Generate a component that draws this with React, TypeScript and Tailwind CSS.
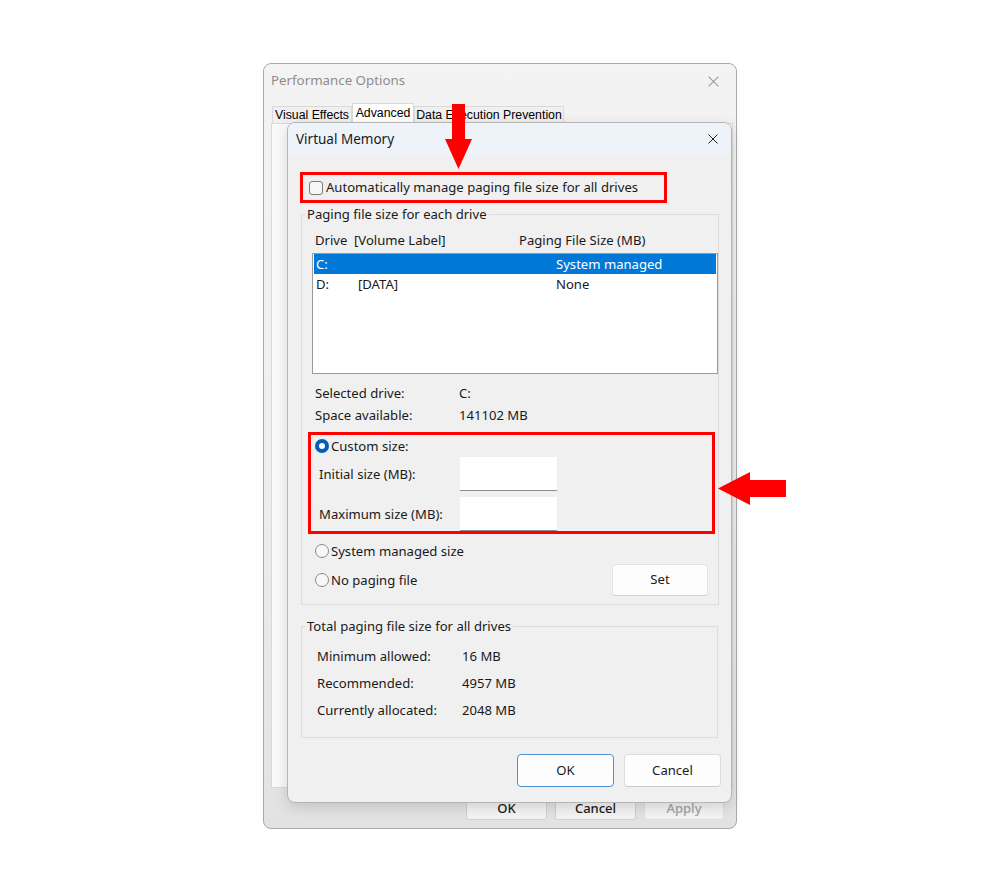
import React from 'react'

function CloseIcon({ className }: { className?: string }) {
  return (
    <svg viewBox="0 0 10 10" className={className} fill="none" stroke="currentColor" strokeWidth="1">
      <path d="M0.5 0.5 L9.5 9.5 M9.5 0.5 L0.5 9.5" />
    </svg>
  )
}

function Radio({ checked }: { checked?: boolean }) {
  if (checked) {
    return (
      <span className="flex h-[14px] w-[14px] shrink-0 items-center justify-center rounded-full bg-[#005fb8]">
        <span className="h-[6px] w-[6px] rounded-full bg-white" />
      </span>
    )
  }
  return <span className="h-[14px] w-[14px] shrink-0 rounded-full border border-[#8a8a8a] bg-[#f7f7f7]" />
}

function SizeInput() {
  return <div className="h-[34px] w-[97px] border-b border-[#8d8d8d] bg-white" />
}

export default function App() {
  const drives = [
    { letter: 'C:', label: '', size: 'System managed', selected: true },
    { letter: 'D:', label: '[DATA]', size: 'None', selected: false },
  ]

  const totals = [
    ['Minimum allowed:', '16 MB'],
    ['Recommended:', '4957 MB'],
    ['Currently allocated:', '2048 MB'],
  ]

  return (
    <div className="relative h-[890px] w-[1000px] overflow-hidden bg-white font-['Noto_Sans','Liberation_Sans',sans-serif] text-[#1a1a1a]">
      {/* Performance Options window (inactive, behind) */}
      <div className="absolute left-[263px] top-[63px] flex h-[766px] w-[474px] flex-col rounded-[8px] border border-[#a9a9a9] bg-gradient-to-b from-[#f3f3f3] via-[#efefef] to-[#e2e2e2]">
        <div className="flex h-[34px] items-center justify-between pl-[7px] pr-[17px] text-[13.3px] text-[#8c8c8c]">
          <span>Performance Options</span>
          <CloseIcon className="h-[11px] w-[11px] text-[#9a9a9a]" />
        </div>
        <div className="flex h-[25px] items-end whitespace-nowrap pl-[8px] font-['Liberation_Sans',sans-serif] text-[12.3px] text-black">
          <div className="flex h-[17px] w-[80px] items-center justify-center border border-b-0 border-[#d9d9d9] bg-[#f0f0f0]">
            Visual Effects
          </div>
          <div className="flex h-[20px] w-[62px] items-center justify-center border border-b-0 border-[#d9d9d9] bg-white">
            Advanced
          </div>
          <div className="flex h-[17px] w-[150px] items-center justify-center border border-b-0 border-[#d9d9d9] bg-[#f0f0f0]">
            Data Execution Prevention
          </div>
        </div>
        <div className="ml-[7px] mr-[3px] h-[665px] border border-[#d9d9d9] bg-[#f9f9f9]" />
        <div className="mt-[10px] flex justify-end gap-[8px] pr-[12px] text-[13px] font-medium">
          <div className="flex h-[22px] w-[81px] items-center justify-center rounded-[3px] border border-[#d0d0d0] bg-[#f3f3f3]">OK</div>
          <div className="flex h-[22px] w-[81px] items-center justify-center rounded-[3px] border border-[#d0d0d0] bg-[#f3f3f3]">Cancel</div>
          <div className="flex h-[22px] w-[80px] items-center justify-center rounded-[3px] border border-[#dedede] bg-[#f3f3f3] text-[#a3a3a3]">Apply</div>
        </div>
      </div>

      {/* Virtual Memory dialog */}
      <div className="absolute left-[287px] top-[122px] flex w-[445px] flex-col overflow-hidden rounded-[8px] border border-[#b5b5b5] bg-[#f0f0f0] text-[13.1px] shadow-[0_4px_14px_rgba(0,0,0,0.14)]">
        <div className="flex h-[32px] items-center justify-between bg-[#eef3f9] pl-[8px] pr-[13px] text-[13.5px]">
          <span>Virtual Memory</span>
          <CloseIcon className="h-[10px] w-[10px] text-[#222]" />
        </div>

        <div className="flex flex-col pl-[12px] pt-[17px]">
          <div className="flex h-[31px] w-[367px] items-center gap-[3px] border-[3px] border-[#ff0000] pl-[6px]">
            <span className="h-[14px] w-[14px] rounded-[3px] border border-[#7a7a7a] bg-[#f6f6f6]" />
            <span className="pt-[1px]">Automatically manage paging file size for all drives</span>
          </div>

          <fieldset className="ml-[1px] mt-[2px] w-[417px] border border-[#dcdcdc]">
            <legend className="ml-[3px] px-[2px] leading-[18px]">Paging file size for each drive</legend>
            <div className="flex flex-col pb-[8px] pl-[13px] pt-[8px]">
              <div className="flex h-[18px] items-center whitespace-nowrap pt-[1px]">
                <span className="w-[39px]">Drive</span>
                <span className="w-[165px]">[Volume Label]</span>
                <span>Paging File Size (MB)</span>
              </div>

              <div className="-ml-[3px] mt-[4px] h-[121px] w-[406px] border border-[#9a9a9a] bg-white">
                {drives.map((d) => (
                  <div
                    key={d.letter}
                    className={
                      d.selected
                        ? 'mx-[1px] flex h-[20px] items-center bg-[#0078d7] pl-[2px] pt-[2px] text-white'
                        : 'mx-[1px] flex h-[20px] items-center pl-[2px] pt-[2px]'
                    }
                  >
                    <span className="w-[42px]">{d.letter}</span>
                    <span className="w-[198px]">{d.label}</span>
                    <span>{d.size}</span>
                  </div>
                ))}
              </div>

              <div className="mt-[8px] flex h-[22px] items-center pt-[1px]">
                <span className="w-[144px]">Selected drive:</span>
                <span>C:</span>
              </div>
              <div className="flex h-[22px] items-center pt-[1px]">
                <span className="w-[144px]">Space available:</span>
                <span>141102 MB</span>
              </div>

              <div className="-ml-[7px] mt-[6px] flex w-[407px] flex-col border-[3px] border-[#ff0000]">
                <div className="flex h-[22px] items-center gap-[2px] pl-[4px]">
                  <Radio checked />
                  <span className="pt-[1px]">Custom size:</span>
                </div>
                <div className="flex h-[34px] items-center pl-[8px]">
                  <span className="w-[141px] pt-[1px]">Initial size (MB):</span>
                  <SizeInput />
                </div>
                <div className="mt-[6px] flex h-[34px] items-center pl-[8px]">
                  <span className="w-[141px] pt-[1px]">Maximum size (MB):</span>
                  <SizeInput />
                </div>
              </div>

              <div className="mt-[8px] flex h-[18px] items-center gap-[2px]">
                <Radio />
                <span className="pt-[1px]">System managed size</span>
              </div>
              <div className="mt-[4px] flex h-[32px] items-center justify-between">
                <div className="flex items-center gap-[2px]">
                  <Radio />
                  <span className="pt-[1px]">No paging file</span>
                </div>
                <div className="mr-[10px] flex h-[32px] w-[96px] items-center justify-center rounded-[4px] border border-[#e2e2e2] border-b-[#cfcfcf] bg-[#fdfdfd]">
                  Set
                </div>
              </div>
            </div>
          </fieldset>

          <fieldset className="ml-[1px] mt-[12px] w-[417px] border border-[#dcdcdc]">
            <legend className="ml-[3px] px-[2px] leading-[18px]">Total paging file size for all drives</legend>
            <div className="flex flex-col pb-[13px] pl-[15px] pt-[8px]">
              {totals.map(([label, value]) => (
                <div key={label} className="flex h-[27px] items-center pt-[1px]">
                  <span className="w-[145px]">{label}</span>
                  <span>{value}</span>
                </div>
              ))}
            </div>
          </fieldset>

          <div className="mt-[16px] flex justify-end gap-[10px] pb-[15px] pr-[10px]">
            <div className="flex h-[33px] w-[97px] items-center justify-center rounded-[4px] border border-[#4a90d9] bg-[#fdfdfd]">
              OK
            </div>
            <div className="flex h-[33px] w-[97px] items-center justify-center rounded-[4px] border border-[#dcdcdc] border-b-[#cccccc] bg-[#fdfdfd]">
              Cancel
            </div>
          </div>
        </div>
      </div>

      {/* annotation arrows */}
      <svg className="absolute left-[445px] top-[104px] h-[65px] w-[27px]" viewBox="0 0 27 65">
        <polygon points="7,0 20,0 20,35 27,35 13.5,65 0,35 7,35" fill="#ff0000" />
      </svg>
      <svg className="absolute left-[718px] top-[472px] h-[33px] w-[68px]" viewBox="0 0 68 33">
        <polygon points="0,16.5 32,0 32,8 68,8 68,25 32,25 32,33" fill="#ff0000" />
      </svg>
    </div>
  )
}
